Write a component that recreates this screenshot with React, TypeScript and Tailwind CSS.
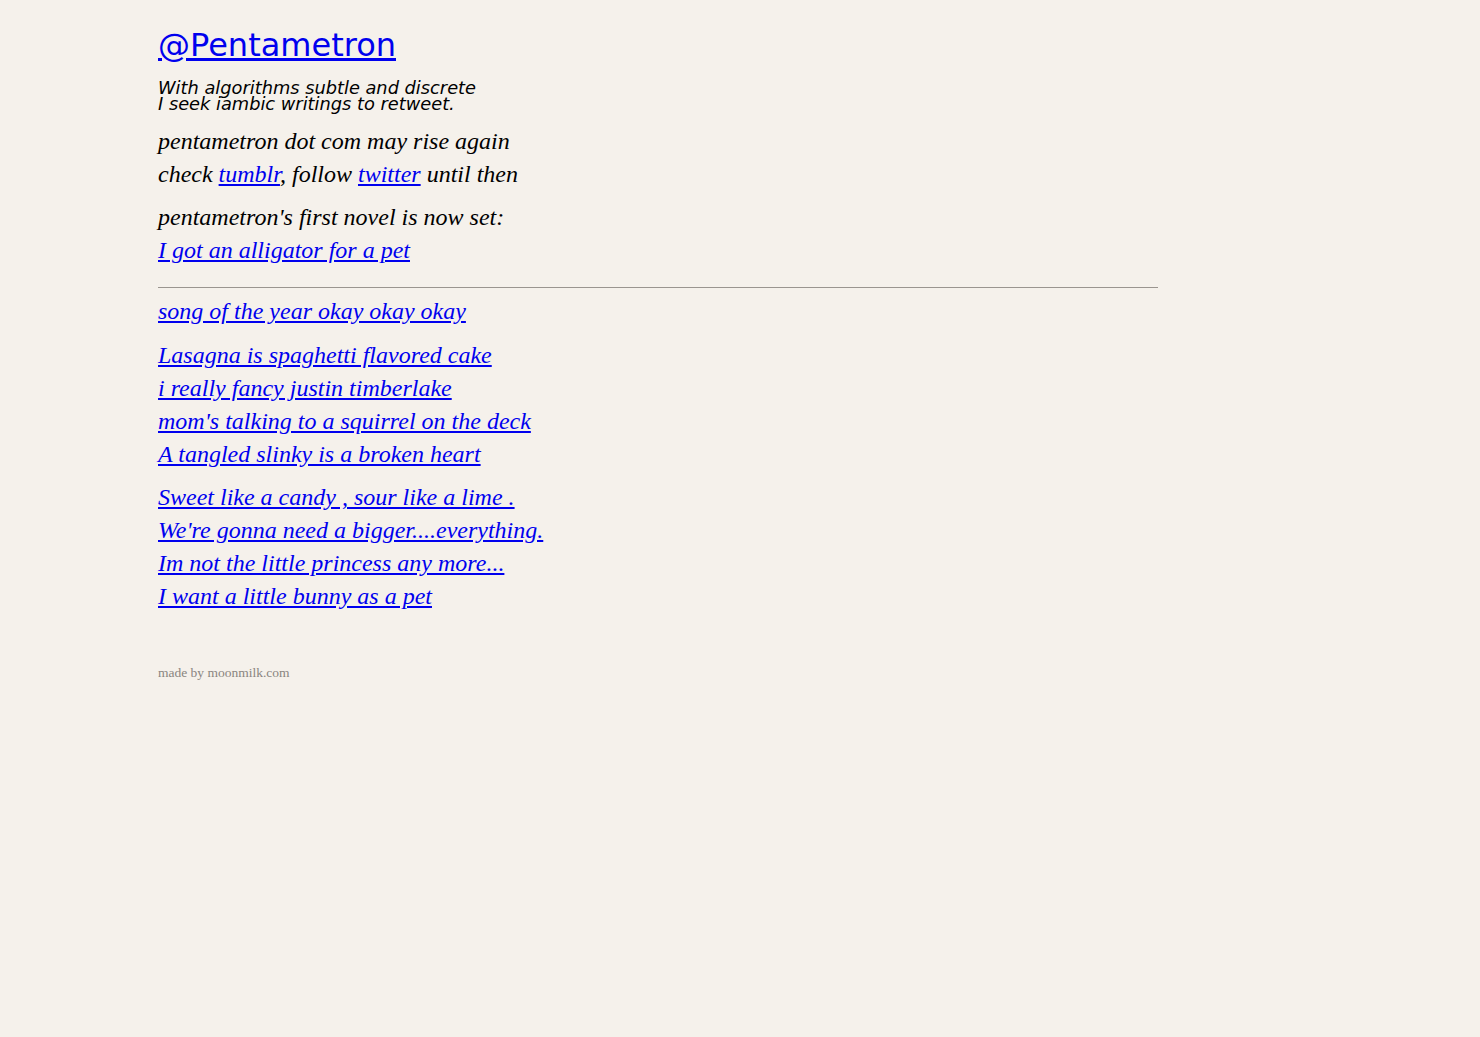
import React from "react";

const serif = { fontFamily: '"Liberation Serif", "Times New Roman", serif' };

function Line({ text, href }: { text: string; href?: boolean }) {
  return (
    <div className="leading-[33px]">
      {href ? (
        <a href="#" className="text-[#0000ee] underline">
          {text}
        </a>
      ) : (
        text
      )}
    </div>
  );
}

export default function App() {
  const group1 = [
    "Lasagna is spaghetti flavored cake",
    "i really fancy justin timberlake",
    "mom's talking to a squirrel on the deck",
    "A tangled slinky is a broken heart",
  ];
  const group2 = [
    "Sweet like a candy , sour like a lime .",
    "We're gonna need a bigger....everything.",
    "Im not the little princess any more...",
    "I want a little bunny as a pet",
  ];

  return (
    <div className="min-h-[1037px] bg-[#f5f1eb] text-black">
      <div className="ml-[158px] w-[1000px] pt-[25px]">
        {/* タイトル */}
        <h1 className="text-[32px] leading-[40px] font-['DejaVu_Sans',sans-serif]">
          <a href="#" className="text-[#0000ee] underline">
            @Pentametron
          </a>
        </h1>
        <div className="mt-[15px] text-[17.8px] leading-[16px] italic font-['DejaVu_Sans',sans-serif]">
          <div>With algorithms subtle and discrete</div>
          <div>I seek iambic writings to retweet.</div>
        </div>

        <div className="mt-[13px] text-[24px] italic" style={serif}>
          <div className="mb-[10px]">
            <Line text="pentametron dot com may rise again" />
            <div className="leading-[33px]">
              check{" "}
              <a href="#" className="text-[#0000ee] underline">
                tumblr
              </a>
              , follow{" "}
              <a href="#" className="text-[#0000ee] underline">
                twitter
              </a>{" "}
              until then
            </div>
          </div>
          <div>
            <Line text="pentametron's first novel is now set:" />
            <Line text="I got an alligator for a pet" href />
          </div>

          <hr className="mt-[20px] mb-[7px] border-t border-[#9a958f]" />

          <Line text="song of the year okay okay okay" href />

          <div className="mt-[11px]">
            {group1.map((t) => (
              <Line key={t} text={t} href />
            ))}
          </div>
          <div className="mt-[10px]">
            {group2.map((t) => (
              <Line key={t} text={t} href />
            ))}
          </div>
        </div>

        <div className="mt-[52px] text-[13.5px] leading-[16px] text-[#8a8580]" style={serif}>
          made by moonmilk.com
        </div>
      </div>
    </div>
  );
}
